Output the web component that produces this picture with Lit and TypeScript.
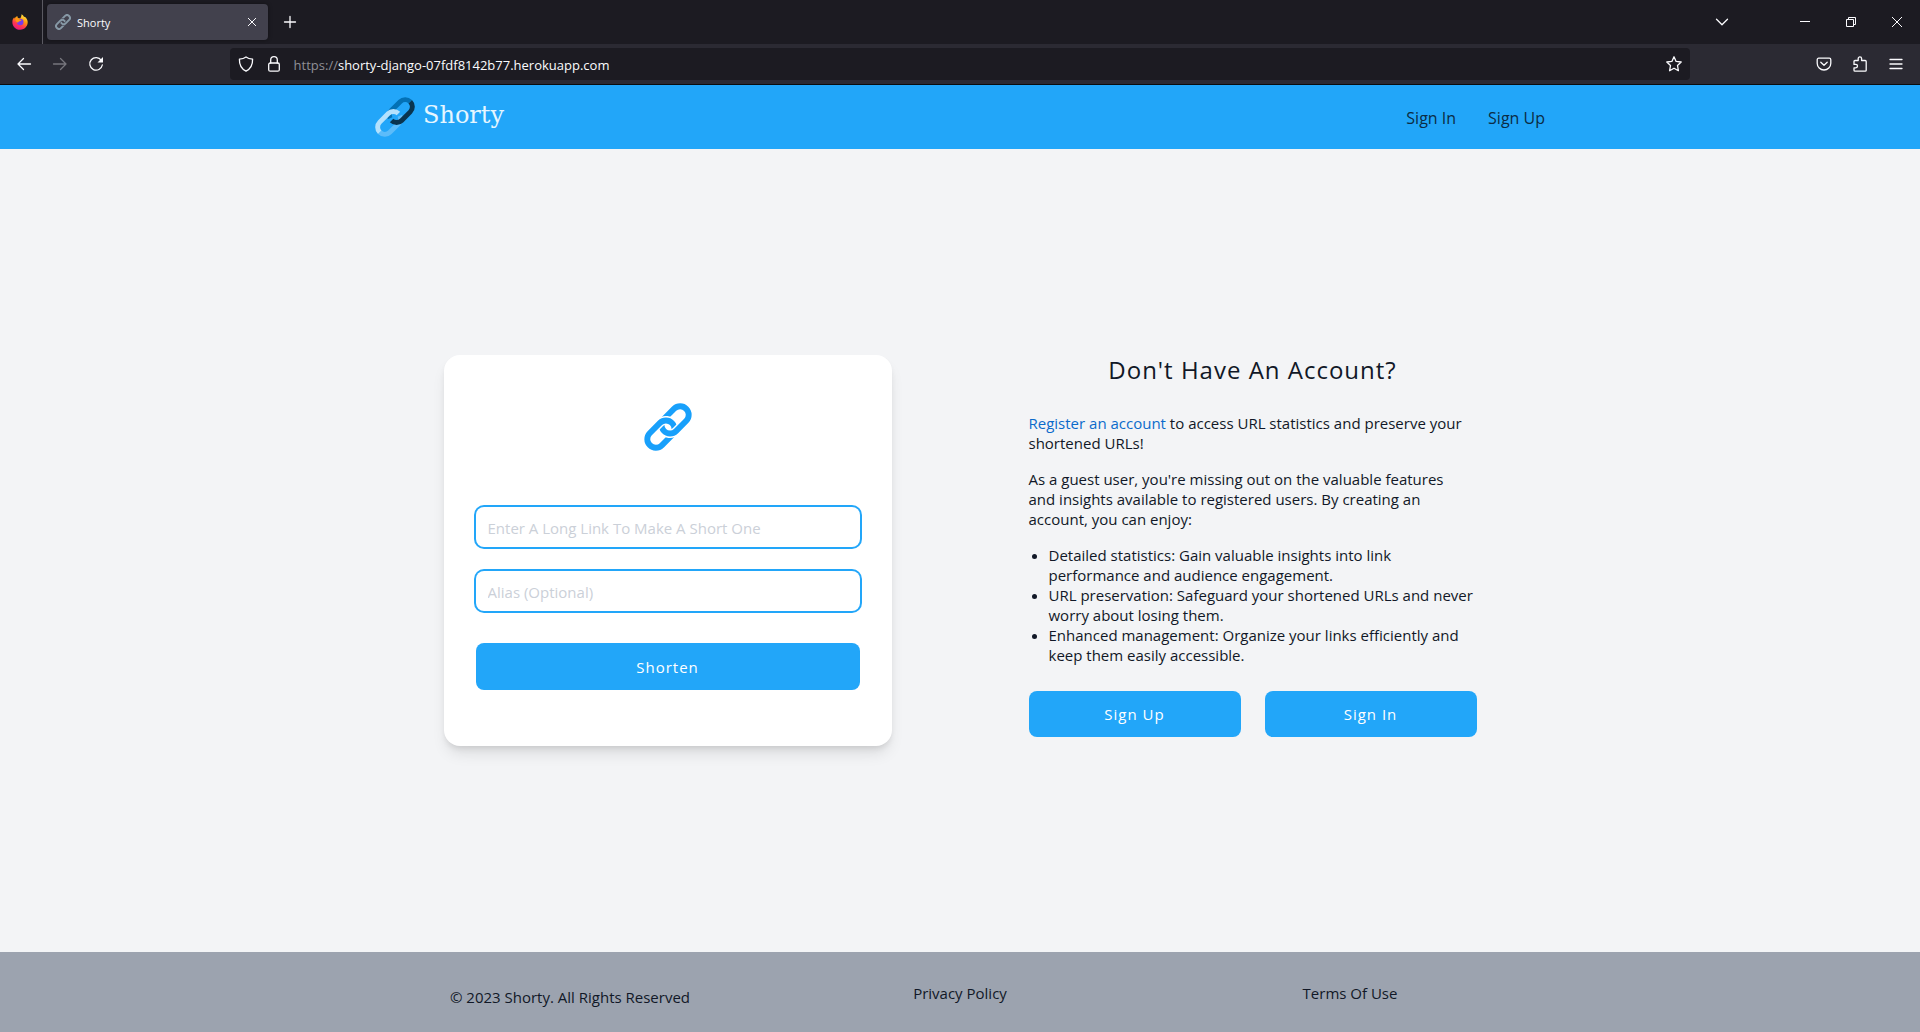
import { LitElement, html, svg, css } from "lit";
import { customElement, property } from "lit/decorators.js";

/* Two interlocked chain links. "plain" leaves a gap where they cross, "duo" shades each half. */
@customElement("chain-icon")
class ChainIcon extends LitElement {
  @property() variant = "plain";

  static styles = css`
    :host { display: block; }
    svg { display: block; width: 100%; height: 100%; fill: none; stroke: currentColor; stroke-width: 6; }
    .halo { stroke: #000; stroke-width: 9; }
    .pale { stroke: #b3e1fd; }
    .sky { stroke: #5cbcfa; }
    .deep { stroke: #0371b5; }
    .navy { stroke: #09344f; }
  `;

  render() {
    const lower = "M17.7 42.7A8.77 8.77 0 0 1 5.3 30.3L15.8 19.8A8.77 8.77 0 0 1 28.2 32.2Z";
    const upper = "M30.3 5.3A8.77 8.77 0 0 1 42.7 17.7L32.2 28.2A8.77 8.77 0 0 1 19.8 15.8Z";
    if (this.variant === "duo") {
      return html`<svg viewBox="-0.5 -0.5 49 49" aria-hidden="true">${svg`
        <path class="deep" d="M18 25.5A8.77 8.77 0 0 1 19.8 15.8L30.3 5.3A8.77 8.77 0 0 1 42.7 5.3"></path>
        <path class="sky" d="M5.3 42.7A8.77 8.77 0 0 0 17.7 42.7L28.2 32.2A8.77 8.77 0 0 0 30 22.5"></path>
        <path class="pale" d="M5.3 42.7A8.77 8.77 0 0 1 5.3 30.3L15.8 19.8A8.77 8.77 0 0 1 28.2 19.8"></path>
        <path class="navy" d="M42.7 5.3A8.77 8.77 0 0 1 42.7 17.7L32.2 28.2A8.77 8.77 0 0 1 19.8 28.2"></path>`}
      </svg>`;
    }
    return html`<svg viewBox="-0.5 -0.5 49 49" aria-hidden="true">${svg`
      <defs>
        <mask id="under-upper" maskUnits="userSpaceOnUse" x="-1" y="-1" width="50" height="50">
          <rect x="-1" y="-1" width="50" height="50" fill="#fff" stroke="none"></rect>
          <path class="halo" d="M18.5 26.5A8.77 8.77 0 0 0 32.2 28.2L42.7 17.7"></path>
        </mask>
        <mask id="under-lower" maskUnits="userSpaceOnUse" x="-1" y="-1" width="50" height="50">
          <rect x="-1" y="-1" width="50" height="50" fill="#fff" stroke="none"></rect>
          <path class="halo" d="M29.5 21.5A8.77 8.77 0 0 0 15.8 19.8L5.3 30.3"></path>
        </mask>
      </defs>
      <g mask="url(#under-upper)"><path d=${lower}></path></g>
      <g mask="url(#under-lower)"><path d=${upper}></path></g>`}
    </svg>`;
  }
}

const icons: Record<string, unknown> = {
  back: svg`<path d="M14.500 8H2M7.500 2.500L2 8l5.500 5.500"></path>`,
  forward: svg`<path d="M1.500 8H14M8.500 2.500L14 8l-5.500 5.500"></path>`,
  reload: svg`<path d="M13.300 4.300A6.300 6.300 0 1 0 14.300 9"></path><path d="M15 1v5.500H9.500z" fill="currentColor" stroke="none"></path>`,
  shield: svg`<path d="M8 .9c2 1.500 4.300 2 6.600 2.200C14.800 9 12.500 13 8 15.200 3.500 13 1.200 9 1.400 3.100 3.700 2.900 6 2.400 8 .9z"></path>`,
  lock: svg`<rect x="2.700" y="7" width="10.600" height="8.200" rx="1.500"></rect><path d="M4.700 7V4a3.300 3.300 0 0 1 6.600 0v3"></path>`,
  star: svg`<path d="M8 .8l2.100 4.600 5.100.6-3.700 3.500.9 5.200L8 12.200l-4.400 2.500.9-5.200L.8 6l5.100-.6z"></path>`,
  pocket: svg`<path d="M2.700 2.200h10.600a1.500 1.500 0 0 1 1.500 1.500v3.500a6.800 6.800 0 0 1-13.600 0V3.700a1.500 1.500 0 0 1 1.500-1.500z"></path><path d="M4.800 6.300L8 9.300l3.200-3"></path>`,
  puzzle: svg`<path d="M2 7V5.500a1 1 0 0 1 1-1h3.200V2.600a1.700 1.700 0 0 1 3.400 0v1.900h3.600a1 1 0 0 1 1 1v8.700a1 1 0 0 1-1 1H3a1 1 0 0 1-1-1v-2.400h1.800a1.700 1.700 0 0 0 0-3.400H2z"></path>`,
  menu: svg`<path d="M2 3.500h12M2 8h12M2 12.500h12"></path>`,
  plus: svg`<path d="M8 2.500v11M2.500 8h11"></path>`,
  close: svg`<path d="M4.300 4.300l7.400 7.400M11.700 4.300l-7.400 7.400" stroke-width="1"></path>`,
  chevron: svg`<path d="M2.500 5.300L8 10.800l5.500-5.500"></path>`,
  minimize: svg`<path d="M3 7.500h10" stroke-width="1"></path>`,
  restore: svg`<path d="M3.500 5.500h7v7h-7zM5.500 5.500v-2h7v7h-2" stroke-width="1"></path>`,
  exit: svg`<path d="M3 3l10 10M13 3L3 13" stroke-width="1"></path>`,
};

const icon = (name: string) =>
  html`<svg class="icon" viewBox="0 0 16 16" aria-hidden="true">${icons[name]}</svg>`;

@customElement("browser-chrome")
class BrowserChrome extends LitElement {
  static styles = css`
    :host { display: block; color: #fbfbfe; font-family: "Open Sans", "Noto Sans", sans-serif; border-bottom: 1px solid #0c0c0d; }
    .icon { display: block; width: 16px; height: 16px; fill: none; stroke: currentColor; stroke-width: 1.3; stroke-linecap: round; stroke-linejoin: round; }
    button { display: grid; place-items: center; padding: 0; border: 0; background: none; color: inherit; width: 36px; height: 36px; }
    button:disabled { color: #77767d; }
    .tabs { display: flex; align-items: center; height: 44px; background: #1c1b22; }
    .firefox { display: grid; place-items: center; width: 43px; height: 44px; padding-right: 2px; box-sizing: border-box; border-right: 1px solid #5b5a62; }
    .firefox svg { width: 18px; height: 18px; }
    .tab { display: flex; align-items: center; box-sizing: border-box; width: 221px; height: 36px; margin-left: 4px; padding: 0 4px 0 8px; border-radius: 4px; background: #42414d; box-shadow: 0 0 4px rgba(0, 0, 0, 0.4); }
    .tab chain-icon { width: 16px; height: 16px; color: #8799a6; }
    .title { flex: 1; padding: 2px 0 0 6px; font-size: 11px; }
    .tab button { width: 24px; height: 24px; }
    .new { margin-left: 4px; }
    .grow { flex: 1; }
    .list { margin-right: 42px; }
    .window { width: 46px; }
    .window .icon { stroke-linecap: butt; }
    .toolbar { display: flex; align-items: center; height: 40px; padding: 0 6px; background: #2b2a33; }
    .spacer { flex: 2; }
    .url { display: flex; flex: 25; align-items: center; gap: 12px; box-sizing: border-box; height: 32px; padding: 0 8px; border-radius: 4px; background: #1c1b22; }
    .address { flex: 1; padding-top: 2px; font-size: 13px; line-height: 30px; }
    .address a { color: inherit; text-decoration: none; }
    .scheme { color: #8f8f96; }
    .url button { width: 16px; height: 32px; }
  `;

  render() {
    return html`
      <div class="tabs">
        <div class="firefox">
          <svg viewBox="0 0 18 18" aria-hidden="true">
            <defs>
              <linearGradient id="flame" x1="0.800" y1="0" x2="0.300" y2="1">
                <stop offset="0" stop-color="#fff44f"></stop>
                <stop offset="0.400" stop-color="#ff980e"></stop>
                <stop offset="0.700" stop-color="#ff3750"></stop>
                <stop offset="1" stop-color="#e31587"></stop>
              </linearGradient>
            </defs>
            <path fill="url(#flame)" d="M10.500 1.200c1 .5 2 1.600 2.400 2.600 1-.2 3 1.200 3.700 4.200.8 4.500-2.600 8.800-7.500 8.800-4.800 0-8.200-4-7.700-8.600.2-1.700.8-2.800 1.800-4 .1.700.2 1 .5 1.300.5-1 1.500-2 2.700-2.400-.1 1 .3 1.700 1 2.100h2c.7-1.200 1.200-2.600 1.100-4z"></path>
            <circle cx="9.200" cy="9" r="3.300" fill="#7a3bec"></circle>
            <path fill="#ff980e" d="M4.400 5.600c1.600-.8 3.500-.4 4.300.8l1.800.5c-.3 1-1.600 1.300-2.500 1.600-.6.300-.6 1.300-1.700 1-1.200-.5-2-2.200-1.900-3.900z"></path>
          </svg>
        </div>
        <div class="tab">
          <chain-icon></chain-icon>
          <span class="title">Shorty</span>
          <button aria-label="Close tab">${icon("close")}</button>
        </div>
        <button class="new" aria-label="New tab">${icon("plus")}</button>
        <div class="grow"></div>
        <button class="list" aria-label="List all tabs">${icon("chevron")}</button>
        <button class="window" aria-label="Minimize">${icon("minimize")}</button>
        <button class="window" aria-label="Restore">${icon("restore")}</button>
        <button class="window" aria-label="Close">${icon("exit")}</button>
      </div>
      <div class="toolbar">
        <button aria-label="Back">${icon("back")}</button>
        <button aria-label="Forward" disabled>${icon("forward")}</button>
        <button aria-label="Reload">${icon("reload")}</button>
        <div class="spacer"></div>
        <div class="url">
          <button aria-label="Tracking protection">${icon("shield")}</button>
          <button aria-label="Connection security">${icon("lock")}</button>
          <div class="address"><a href="#"><span class="scheme">https://</span>shorty-django-07fdf8142b77.herokuapp.com</a></div>
          <button aria-label="Bookmark">${icon("star")}</button>
        </div>
        <div class="spacer"></div>
        <button aria-label="Save to Pocket">${icon("pocket")}</button>
        <button aria-label="Extensions">${icon("puzzle")}</button>
        <button aria-label="Menu">${icon("menu")}</button>
      </div>
    `;
  }
}

const benefits = [
  "Detailed statistics: Gain valuable insights into link performance and audience engagement.",
  "URL preservation: Safeguard your shortened URLs and never worry about losing them.",
  "Enhanced management: Organize your links efficiently and keep them easily accessible.",
];

@customElement("app-root")
class AppRoot extends LitElement {
  static styles = css`
    :host { display: flex; flex-direction: column; min-height: 100vh; background: #f3f4f6; color: #111827; font-family: "Open Sans", "Noto Sans", sans-serif; font-size: 15px; line-height: 20px; }
    a { color: inherit; text-decoration: none; }
    .wrap { box-sizing: border-box; width: 100%; max-width: 1170px; margin: 0 auto; }
    header { background: #22a6f9; }
    .bar { display: flex; align-items: center; justify-content: space-between; height: 64px; }
    .brand { display: flex; align-items: center; gap: 8px; color: #e6f6ff; font-family: "DejaVu Serif", serif; font-size: 24px; line-height: 28px; }
    .brand span { padding-bottom: 4px; }
    .brand chain-icon { width: 40px; height: 40px; }
    nav { display: flex; gap: 32px; padding-top: 2px; color: #0b2c44; font-size: 16px; }
    main { display: flex; flex: 1; align-items: center; }
    .columns { display: grid; grid-template-columns: repeat(auto-fit, minmax(448px, 1fr)); justify-items: center; }
    .columns > * { box-sizing: border-box; width: 100%; max-width: 448px; }
    .card { display: flex; flex-direction: column; gap: 24px; padding: 48px 32px 56px; border-radius: 16px; background: #fff; box-shadow: 0 10px 15px -3px rgba(0, 0, 0, 0.1), 0 4px 6px -2px rgba(0, 0, 0, 0.1); }
    .card chain-icon { width: 48px; height: 48px; margin: 0 auto 32px; color: #18a0fb; }
    input { box-sizing: border-box; width: 100%; height: 40px; padding: 2px 12px 0; border: 0; border-radius: 8px; outline: 0; box-shadow: 0 0 0 2px #22a6f9; background: #fff; color: inherit; font: inherit; }
    input::placeholder { color: #cbd0d8; opacity: 1; }
    .button { display: block; box-sizing: border-box; width: 100%; padding: 13px 0; border: 0; border-radius: 8px; background: #22a6f9; color: #fff; font: inherit; letter-spacing: 1px; text-align: center; }
    .card .button { margin-top: 8px; height: 47px; }
    h2 { margin: 0 0 28px; font-size: 24px; font-weight: 400; line-height: 30px; letter-spacing: 1px; text-align: center; }
    p { margin: 0 0 16px; padding-right: 8px; }
    .register { color: #0b6bcb; }
    ul { margin: 0 0 26px; padding-left: 20px; }
    .actions { display: grid; grid-template-columns: 1fr 1fr; gap: 24px; }
    footer { background: #9ca3af; }
    .legal { display: grid; grid-template-columns: repeat(3, 1fr); justify-items: center; height: 80px; padding-top: 31px; }
    .copyright { padding-top: 4px; }
  `;

  render() {
    return html`
      <browser-chrome></browser-chrome>
      <header>
        <div class="wrap bar">
          <a class="brand" href="#"><chain-icon variant="duo"></chain-icon><span>Shorty</span></a>
          <nav><a href="#">Sign In</a><a href="#">Sign Up</a></nav>
        </div>
      </header>
      <main>
        <div class="wrap columns">
          <form class="card" @submit=${(e: Event) => e.preventDefault()}>
            <chain-icon></chain-icon>
            <input type="text" aria-label="Long link" placeholder="Enter A Long Link To Make A Short One" />
            <input type="text" aria-label="Alias" placeholder="Alias (Optional)" />
            <button class="button" type="submit">Shorten</button>
          </form>
          <section>
            <h2>Don't Have An Account?</h2>
            <p><a class="register" href="#">Register an account</a> to access URL statistics and preserve your shortened URLs!</p>
            <p>As a guest user, you're missing out on the valuable features and insights available to registered users. By creating an account, you can enjoy:</p>
            <ul>${benefits.map((text) => html`<li>${text}</li>`)}</ul>
            <div class="actions">
              <a class="button" href="#">Sign Up</a>
              <a class="button" href="#">Sign In</a>
            </div>
          </section>
        </div>
      </main>
      <footer>
        <div class="wrap legal">
          <span class="copyright">© 2023 Shorty. All Rights Reserved</span>
          <a href="#">Privacy Policy</a>
          <a href="#">Terms Of Use</a>
        </div>
      </footer>
    `;
  }
}
